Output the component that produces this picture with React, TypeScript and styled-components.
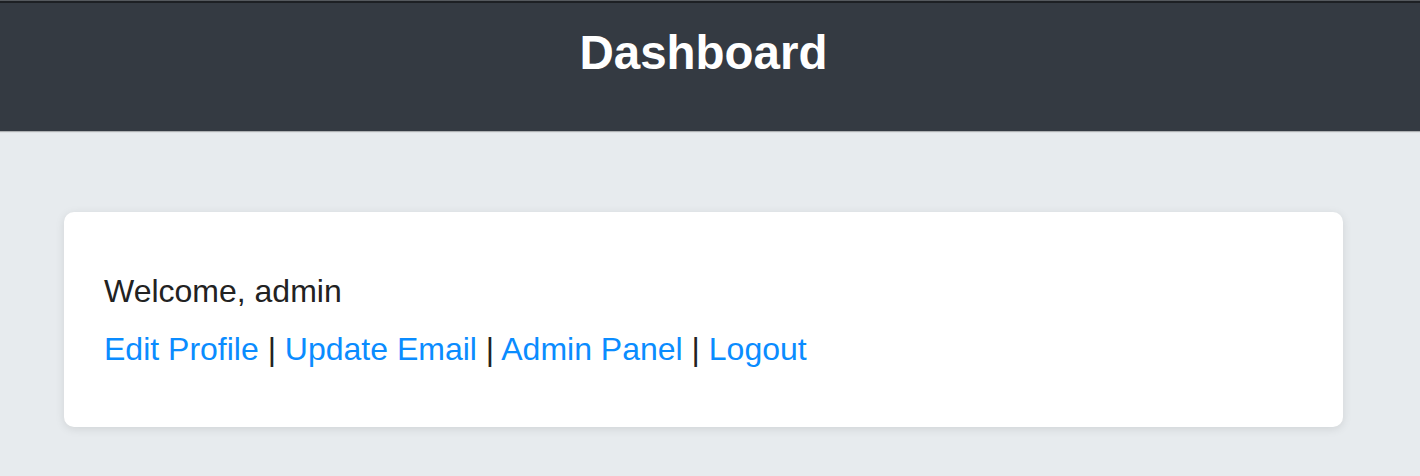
import React from "react";
import styled, { createGlobalStyle } from "styled-components";

const Global = createGlobalStyle`
  html, body {
    margin: 0;
    padding: 0;
    background: #e7ebee;
    font-family: "Liberation Sans", Arial, sans-serif;
  }
`;

const Page = styled.div`
  min-height: 476px;
  background: #e7ebee;
`;

const Header = styled.header`
  box-sizing: border-box;
  height: 131px;
  background: #343a42;
  border-top: 1px solid #55595e;
  box-shadow: inset 0 2px 0 #1d2024, 0 1px 1px rgba(0, 0, 0, 0.25);
  padding: 25px 13px 0 0;
  text-align: center;
`;

const Title = styled.h1`
  margin: 0;
  font-size: 47.5px;
  line-height: 54px;
  font-weight: 700;
  color: #ffffff;
`;

const Main = styled.main`
  padding: 81px 77px 0 64px;
`;

const Card = styled.section`
  box-sizing: border-box;
  height: 215px;
  background: #ffffff;
  border-radius: 10px;
  box-shadow: 0 2px 10px rgba(0, 0, 0, 0.1);
  padding: 61px 40px 0 40px;
  display: flex;
  flex-direction: column;
  gap: 22px;
`;

const Line = styled.p`
  margin: 0;
  font-size: 32px;
  line-height: 36px;
  color: #222222;
`;

const Link = styled.a`
  color: #0a8cff;
  text-decoration: none;
`;

const links = ["Edit Profile", "Update Email", "Admin Panel", "Logout"];

export default function App() {
  return (
    <Page>
      <Global />
      <Header>
        <Title>Dashboard</Title>
      </Header>
      <Main>
        <Card>
          <Line>Welcome, admin</Line>
          <Line>
            {links.map((l, i) => (
              <React.Fragment key={l}>
                {i > 0 && " | "}
                <Link href="#">{l}</Link>
              </React.Fragment>
            ))}
          </Line>
        </Card>
      </Main>
    </Page>
  );
}
